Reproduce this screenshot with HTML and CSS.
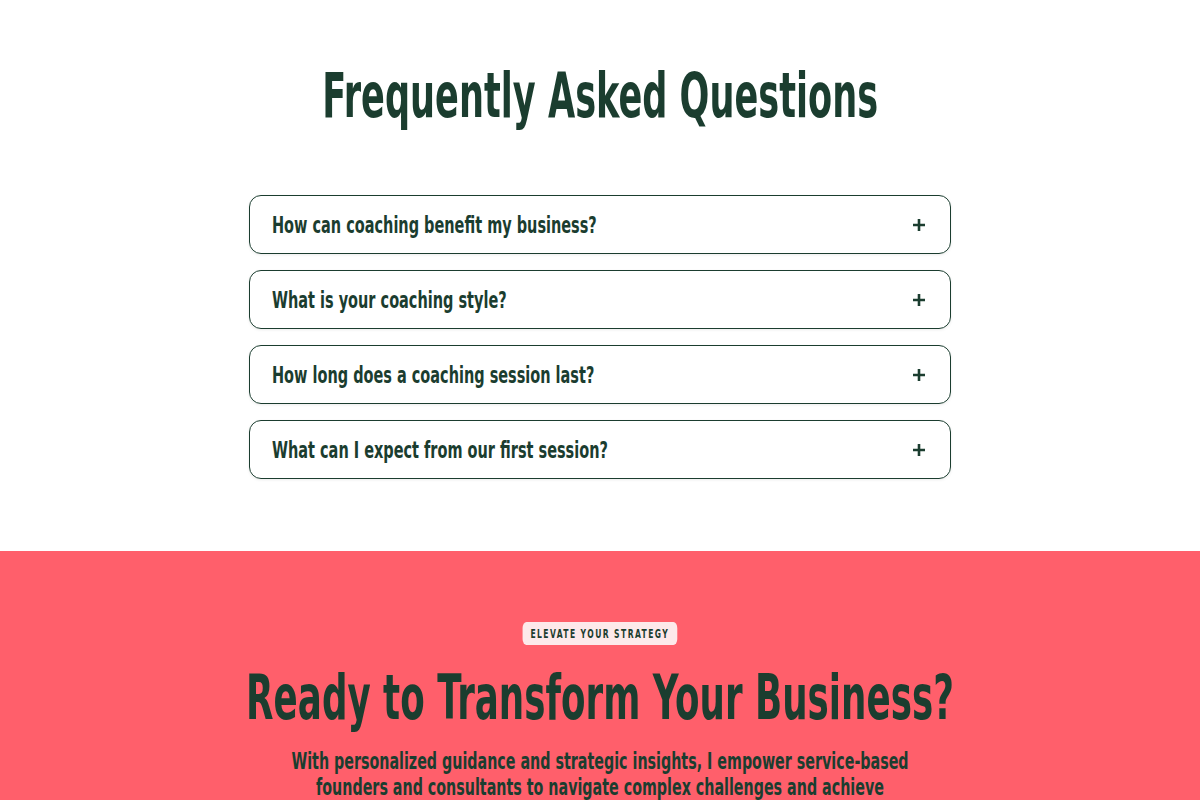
FILE: index.html
```html
<!DOCTYPE html>
<html lang="en">
<head>
<meta charset="utf-8">
<title>FAQ</title>
<link rel="stylesheet" href="styles.css">
</head>
<body>
<section class="faq">
  <h1 class="faq-title">Frequently Asked Questions</h1>
  <div class="faq-list">
    <div class="faq-item">
      <span class="faq-q">How can coaching benefit my business?</span>
      <svg class="faq-plus" viewBox="0 0 14 14" width="14" height="14"><path d="M7 1v12M1 7h12"/></svg>
    </div>
    <div class="faq-item">
      <span class="faq-q">What is your coaching style?</span>
      <svg class="faq-plus" viewBox="0 0 14 14" width="14" height="14"><path d="M7 1v12M1 7h12"/></svg>
    </div>
    <div class="faq-item">
      <span class="faq-q">How long does a coaching session last?</span>
      <svg class="faq-plus" viewBox="0 0 14 14" width="14" height="14"><path d="M7 1v12M1 7h12"/></svg>
    </div>
    <div class="faq-item">
      <span class="faq-q">What can I expect from our first session?</span>
      <svg class="faq-plus" viewBox="0 0 14 14" width="14" height="14"><path d="M7 1v12M1 7h12"/></svg>
    </div>
  </div>
</section>
<section class="cta">
  <div class="badge">ELEVATE YOUR STRATEGY</div>
  <h2 class="cta-title">Ready to Transform Your Business?</h2>
  <p class="cta-text">With personalized guidance and strategic insights, I empower service-based founders and consultants to navigate complex challenges and achieve sustainable, lasting growth.</p>
</section>
</body>
</html>
```

FILE: styles.css
```css
* { box-sizing: border-box; }
html, body { margin: 0; padding: 0; background: #ffffff; }
body {
  font-family: "Liberation Sans Narrow", "DejaVu Sans Condensed", "Liberation Sans", sans-serif;
  color: #1b3d2f;
}
.faq {
  padding: 59px 0 72px;
  display: flex;
  flex-direction: column;
  align-items: center;
}
.faq-title {
  margin: 0 0 62px;
  font-size: 62px;
  line-height: 74px;
  font-weight: 700;
  color: #1b3d2f;
  white-space: nowrap;
  transform: scaleX(0.63);
}
.faq-list {
  width: 702px;
  display: flex;
  flex-direction: column;
  gap: 16px;
}
.faq-item {
  height: 59px;
  border: 1.5px solid #1b3d2f;
  border-radius: 12px;
  padding: 0 24px 0 22px;
  display: flex;
  align-items: center;
  justify-content: space-between;
  box-shadow: 0 1px 3px rgba(0, 0, 0, 0.08);
}
.faq-q {
  display: inline-block;
  font-size: 23px;
  line-height: 26px;
  font-weight: 700;
  white-space: nowrap;
  transform: scaleX(0.7);
  transform-origin: left center;
}
.faq-plus {
  flex: none;
  stroke: #1b3d2f;
  stroke-width: 2.6;
  fill: none;
}
.cta {
  background: #ff5f6b;
  padding: 71px 0 40px;
  display: flex;
  flex-direction: column;
  align-items: center;
}
.badge {
  height: 23px;
  padding: 0 12px;
  border-radius: 6px;
  background: #fde9ea;
  font-size: 13px;
  line-height: 23px;
  font-weight: 700;
  letter-spacing: 2.2px;
  transform: scaleX(0.65);
}
.cta-title {
  margin: 16px 0 13px;
  font-size: 62px;
  line-height: 74px;
  font-weight: 700;
  white-space: nowrap;
  transform: scaleX(0.64);
}
.cta-text {
  margin: 0;
  width: 930px;
  flex: none;
  font-size: 23px;
  line-height: 26px;
  font-weight: 700;
  text-align: center;
  transform: scaleX(0.69);
}
```
